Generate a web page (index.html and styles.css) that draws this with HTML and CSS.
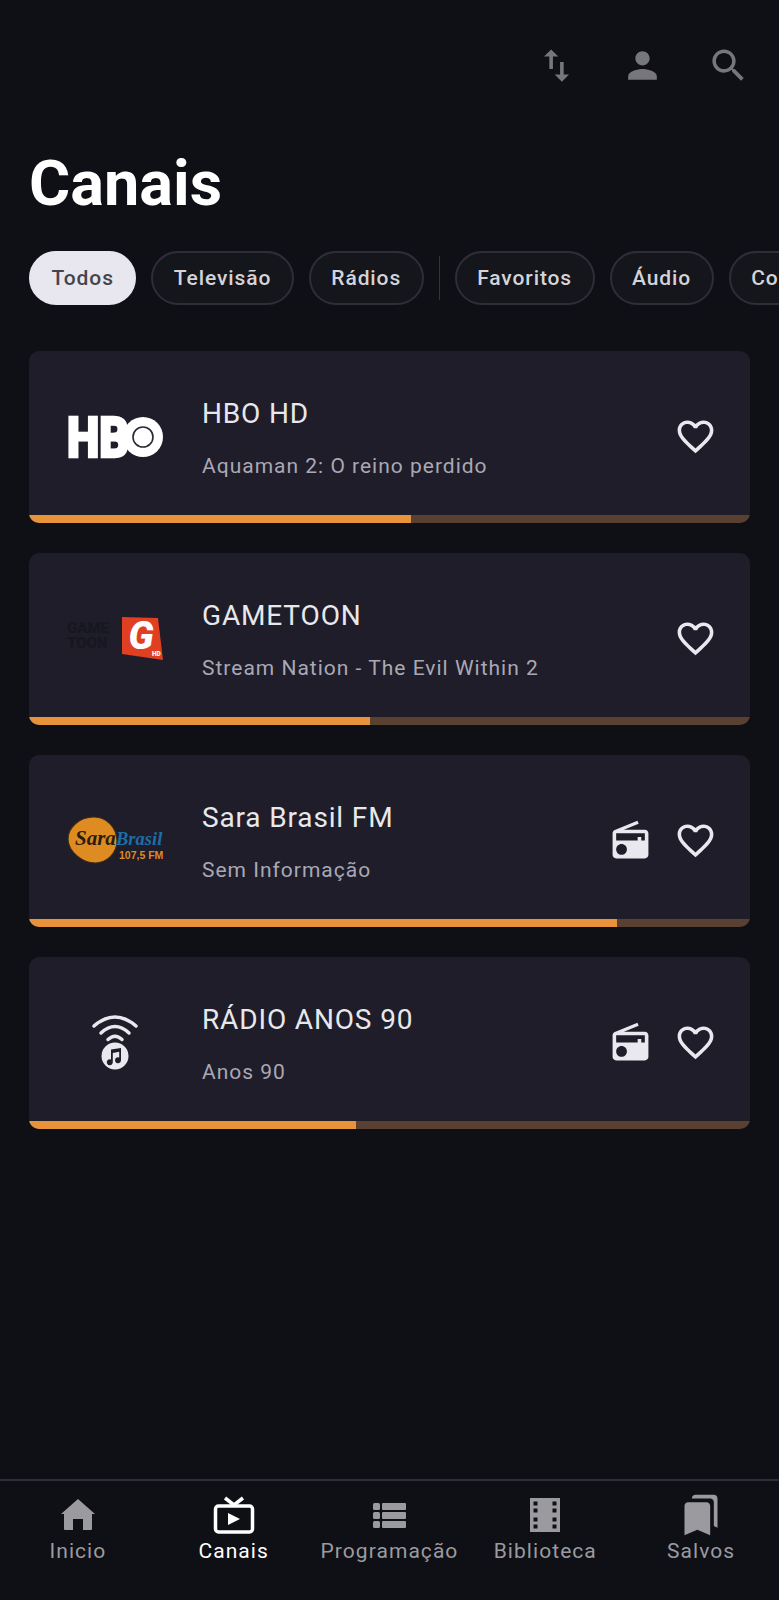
FILE: index.html
```html
<!DOCTYPE html>
<html lang="en">
<head>
  <meta charset="UTF-8" />
  <meta name="viewport" content="width=device-width, initial-scale=1.0"/>
  <title>Canais</title>
  <link rel="stylesheet" href="styles.css">
</head>
<body>
  <div class="app">
    <div class="top-bar">
      <svg class="top-icon" viewBox="0 0 24 24"><path d="M16 17.01V10h-2v7.01h-3L15 21l4-3.99h-3zM9 3L5 6.99h3V14h2V6.99h3L9 3z"/></svg>
      <svg class="top-icon" viewBox="0 0 24 24"><path d="M12 12c2.21 0 4-1.79 4-4s-1.79-4-4-4-4 1.79-4 4 1.79 4 4 4zm0 2c-2.67 0-8 1.34-8 4v2h16v-2c0-2.66-5.33-4-8-4z"/></svg>
      <svg class="top-icon" viewBox="0 0 24 24"><path d="M15.5 14h-.79l-.28-.27C15.41 12.59 16 11.11 16 9.5 16 5.91 13.09 3 9.5 3S3 5.91 3 9.5 5.91 16 9.5 16c1.61 0 3.09-.59 4.23-1.57l.27.28v.79l5 4.99L20.49 19l-4.99-5zm-6 0C7.01 14 5 11.99 5 9.5S7.01 5 9.5 5 14 7.01 14 9.5 11.99 14 9.5 14z"/></svg>
    </div>

    <h1 class="page-title">Canais</h1>

    <div class="chips">
      <span class="chip chip-active">Todos</span>
      <span class="chip">Televisão</span>
      <span class="chip">Rádios</span>
      <span class="chip-divider"></span>
      <span class="chip">Favoritos</span>
      <span class="chip">Áudio</span>
      <span class="chip chip-cut">Co</span>
    </div>

    <div class="channel-list">
      <div class="channel-card">
        <div class="channel-row">
          <svg class="channel-logo" viewBox="0 0 98 98">
            <text class="logo-hbo" x="1" y="69" textLength="62" lengthAdjust="spacingAndGlyphs">HB</text>
            <circle cx="77" cy="49" r="20" fill="#fff"/>
            <circle cx="77" cy="49" r="10" fill="#fff" stroke="#2a2933" stroke-width="1.6"/>
          </svg>
          <div class="channel-info">
            <div class="channel-name">HBO HD</div>
            <div class="channel-show">Aquaman 2: O reino perdido</div>
          </div>
          <svg class="action-icon" viewBox="0 0 24 24"><path d="M16.5 3c-1.74 0-3.41.81-4.5 2.09C10.91 3.81 9.24 3 7.5 3 4.42 3 2 5.42 2 8.5c0 3.78 3.4 6.86 8.55 11.54L12 21.35l1.45-1.32C18.6 15.36 22 12.28 22 8.5 22 5.42 19.58 3 16.5 3zm-4.4 15.55l-.1.1-.1-.1C7.14 14.24 4 11.39 4 8.5 4 6.5 5.5 5 7.5 5c1.54 0 3.04.99 3.57 2.36h1.87C13.46 5.99 14.96 5 16.5 5c2 0 3.5 1.5 3.5 3.5 0 2.89-3.14 5.74-7.9 10.05z"/></svg>
        </div>
        <div class="progress"><div class="progress-fill" style="width: 53%"></div></div>
      </div>

      <div class="channel-card">
        <div class="channel-row">
          <svg class="channel-logo" viewBox="0 0 98 98">
            <text class="logo-game" x="1" y="43">GAME</text>
            <text class="logo-game" x="1" y="58">TOON</text>
            <path d="M56 27 92 28 97 70 56 64z" fill="#e03f22"/>
            <text class="logo-g" x="75" y="59" text-anchor="middle">G</text>
            <text class="logo-hd" x="86" y="66">HD</text>
          </svg>
          <div class="channel-info">
            <div class="channel-name">GAMETOON</div>
            <div class="channel-show">Stream Nation - The Evil Within 2</div>
          </div>
          <svg class="action-icon" viewBox="0 0 24 24"><path d="M16.5 3c-1.74 0-3.41.81-4.5 2.09C10.91 3.81 9.24 3 7.5 3 4.42 3 2 5.42 2 8.5c0 3.78 3.4 6.86 8.55 11.54L12 21.35l1.45-1.32C18.6 15.36 22 12.28 22 8.5 22 5.42 19.58 3 16.5 3zm-4.4 15.55l-.1.1-.1-.1C7.14 14.24 4 11.39 4 8.5 4 6.5 5.5 5 7.5 5c1.54 0 3.04.99 3.57 2.36h1.87C13.46 5.99 14.96 5 16.5 5c2 0 3.5 1.5 3.5 3.5 0 2.89-3.14 5.74-7.9 10.05z"/></svg>
        </div>
        <div class="progress"><div class="progress-fill" style="width: 47.3%"></div></div>
      </div>

      <div class="channel-card">
        <div class="channel-row">
          <svg class="channel-logo" viewBox="0 0 98 98">
            <path d="M2 47C2 35 14 25 28 25 41 25 51 36 51 49 51 62 40 71 29 71 17 71 2 60 2 47z" fill="#de8b22" stroke="#3a2a18" stroke-width="1.2"/>
            <text class="logo-sara" x="9" y="53">Sara</text>
            <text class="logo-brasil" x="50" y="53">Brasil</text>
            <text class="logo-fm" x="53" y="67">107,5 FM</text>
          </svg>
          <div class="channel-info">
            <div class="channel-name">Sara Brasil FM</div>
            <div class="channel-show">Sem Informação</div>
          </div>
          <svg class="action-icon radio-icon" viewBox="0 0 24 24"><path d="M3.24 6.15C2.51 6.43 2 7.17 2 8v12c0 1.1.89 2 2 2h16c1.11 0 2-.9 2-2V8c0-1.11-.89-2-2-2H8.3l8.26-3.34L15.88 1 3.24 6.15zM7 20c-1.66 0-3-1.34-3-3s1.34-3 3-3 3 1.34 3 3-1.34 3-3 3zm13-8h-2v-2h-2v2H4V8h16v4z"/></svg>
          <svg class="action-icon" viewBox="0 0 24 24"><path d="M16.5 3c-1.74 0-3.41.81-4.5 2.09C10.91 3.81 9.24 3 7.5 3 4.42 3 2 5.42 2 8.5c0 3.78 3.4 6.86 8.55 11.54L12 21.35l1.45-1.32C18.6 15.36 22 12.28 22 8.5 22 5.42 19.58 3 16.5 3zm-4.4 15.55l-.1.1-.1-.1C7.14 14.24 4 11.39 4 8.5 4 6.5 5.5 5 7.5 5c1.54 0 3.04.99 3.57 2.36h1.87C13.46 5.99 14.96 5 16.5 5c2 0 3.5 1.5 3.5 3.5 0 2.89-3.14 5.74-7.9 10.05z"/></svg>
        </div>
        <div class="progress"><div class="progress-fill" style="width: 81.5%"></div></div>
      </div>

      <div class="channel-card">
        <div class="channel-row">
          <svg class="channel-logo" viewBox="0 0 98 98">
            <path class="logo-wave" d="M28 32Q49 14 70 32"/>
            <path class="logo-wave" d="M35 39Q49 26 63 39"/>
            <path class="logo-wave" d="M42 45.5Q49 39 56 45.5"/>
            <circle cx="49" cy="62" r="13.5" fill="#e9e8ee"/>
            <path d="M45 55.5v10a3 3 0 1 0 1.8 2.6v-9l6.4-1.3v5.7a3 3 0 1 0 1.8 2.6V54z" fill="#1e1d29"/>
          </svg>
          <div class="channel-info">
            <div class="channel-name">RÁDIO ANOS 90</div>
            <div class="channel-show">Anos 90</div>
          </div>
          <svg class="action-icon radio-icon" viewBox="0 0 24 24"><path d="M3.24 6.15C2.51 6.43 2 7.17 2 8v12c0 1.1.89 2 2 2h16c1.11 0 2-.9 2-2V8c0-1.11-.89-2-2-2H8.3l8.26-3.34L15.88 1 3.24 6.15zM7 20c-1.66 0-3-1.34-3-3s1.34-3 3-3 3 1.34 3 3-1.34 3-3 3zm13-8h-2v-2h-2v2H4V8h16v4z"/></svg>
          <svg class="action-icon" viewBox="0 0 24 24"><path d="M16.5 3c-1.74 0-3.41.81-4.5 2.09C10.91 3.81 9.24 3 7.5 3 4.42 3 2 5.42 2 8.5c0 3.78 3.4 6.86 8.55 11.54L12 21.35l1.45-1.32C18.6 15.36 22 12.28 22 8.5 22 5.42 19.58 3 16.5 3zm-4.4 15.55l-.1.1-.1-.1C7.14 14.24 4 11.39 4 8.5 4 6.5 5.5 5 7.5 5c1.54 0 3.04.99 3.57 2.36h1.87C13.46 5.99 14.96 5 16.5 5c2 0 3.5 1.5 3.5 3.5 0 2.89-3.14 5.74-7.9 10.05z"/></svg>
        </div>
        <div class="progress"><div class="progress-fill" style="width: 45.4%"></div></div>
      </div>
    </div>

    <nav class="bottom-nav">
      <div class="nav-item">
        <svg class="nav-icon" viewBox="0 0 44 44"><path d="M17 37V26h10v11h8a1 1 0 0 0 1-1V21h3L22 6 5 21h3v15a1 1 0 0 0 1 1z"/></svg>
        <span>Inicio</span>
      </div>
      <div class="nav-item nav-item-active">
        <svg class="nav-icon" viewBox="0 0 44 44">
          <path class="tv-stroke" d="M13 5l9 7 9-7"/>
          <rect class="tv-stroke" x="3.5" y="13" width="37" height="26" rx="3"/>
          <path d="M16 20l12 6-12 6z"/>
        </svg>
        <span>Canais</span>
      </div>
      <div class="nav-item">
        <svg class="nav-icon" viewBox="0 0 44 44">
          <rect x="6" y="10" width="7" height="7" rx="1.5"/><rect x="15" y="10" width="24" height="7" rx="1"/>
          <rect x="6" y="19" width="7" height="7" rx="1.5"/><rect x="15" y="19" width="24" height="7" rx="1"/>
          <rect x="6" y="28" width="7" height="7" rx="1.5"/><rect x="15" y="28" width="24" height="7" rx="1"/>
        </svg>
        <span>Programação</span>
      </div>
      <div class="nav-item">
        <svg class="nav-icon" viewBox="0 0 44 44">
          <path fill-rule="evenodd" d="M7 5h30v34H7zM10.5 8.5v4h4v-4zM29.5 8.5v4h4v-4zM10.5 15.500v4h4v-4zM29.5 15.500v4h4v-4zM10.5 24.500v4h4v-4zM29.5 24.500v4h4v-4zM10.5 31.500v4h4v-4zM29.5 31.500v4h4v-4z"/>
        </svg>
        <span>Biblioteca</span>
      </div>
      <div class="nav-item">
        <svg class="nav-icon" viewBox="0 0 24 24"><path d="M19 18l2 1V3c0-1.1-.9-2-2-2H8.99C7.89 1 7 1.9 7 3h10c1.1 0 2 .9 2 2v13zM15 5H5c-1.1 0-2 .9-2 2v16l7-3 7 3V7c0-1.1-.9-2-2-2z"/></svg>
        <span>Salvos</span>
      </div>
    </nav>
  </div>
</body>
</html>
```

FILE: styles.css
```css
body {
  font-family: 'Roboto', sans-serif;
  background-color: #0f0f16;
  color: #e8e8ec;
  margin: 0;
}

.app {
  display: flex;
  flex-direction: column;
  height: 1600px;
  overflow: hidden;
}

.top-bar {
  display: flex;
  justify-content: flex-end;
  gap: 43px;
  padding: 44px 29px 0 0;
}

.top-icon {
  width: 43px;
  height: 43px;
  fill: #77767c;
}

.page-title {
  margin: 60px 0 0 29px;
  font-size: 63px;
  line-height: 73px;
  font-weight: 700;
  color: #ffffff;
}

.chips {
  display: flex;
  align-items: center;
  gap: 15px;
  margin-top: 31px;
  padding-left: 29px;
}

.chip {
  flex-shrink: 0;
  box-sizing: border-box;
  height: 54px;
  line-height: 50px;
  padding: 0 20.5px;
  border: 2px solid #2e2e38;
  border-radius: 27px;
  font-size: 21px;
  font-weight: 500;
  letter-spacing: 0.9px;
  color: #d4d3d8;
  background-color: #15151c;
}

.chip-active {
  background-color: #e8e7ef;
  border-color: #e8e7ef;
  color: #45444c;
}

/* the last chip runs off the right edge of the screen */
.chip-cut {
  padding-right: 60px;
}

.chip-divider {
  flex-shrink: 0;
  width: 1px;
  height: 44px;
  background-color: #33333c;
}

.channel-list {
  display: flex;
  flex-direction: column;
  gap: 30px;
  margin: 46px 29px 0;
}

.channel-card {
  display: flex;
  flex-direction: column;
  height: 172px;
  background-color: #1e1d29;
  border-radius: 10px;
  overflow: hidden;
}

.channel-row {
  flex: 1;
  display: flex;
  align-items: center;
  padding: 7px 33px 0 37px;
}

.channel-logo {
  flex-shrink: 0;
  width: 98px;
  height: 98px;
  margin-right: 38px;
}

.channel-info {
  flex: 1;
  display: flex;
  flex-direction: column;
  gap: 21px;
  margin-top: 3px;
}

.channel-name {
  font-size: 28px;
  line-height: 35px;
  letter-spacing: 0.85px;
  color: #e8e8ec;
}

.channel-show {
  font-size: 21px;
  line-height: 28px;
  letter-spacing: 1px;
  color: #aaa8b4;
}

.action-icon {
  width: 43px;
  height: 43px;
  fill: #e9e8ee;
}

.radio-icon {
  margin-right: 22px;
}

.progress {
  height: 8px;
  background-color: #5a4030;
}

.progress-fill {
  height: 100%;
  background-color: #e8923a;
}

.logo-hbo {
  font-family: 'Roboto', sans-serif;
  font-size: 56px;
  font-weight: 900;
  fill: #ffffff;
  stroke: #ffffff;
  stroke-width: 2.5px;
}

.logo-game {
  font-family: 'Roboto', sans-serif;
  font-size: 15px;
  font-weight: 900;
  fill: #17171f;
}

.logo-g {
  font-family: 'Roboto', sans-serif;
  font-size: 38px;
  font-weight: 900;
  font-style: italic;
  fill: #ffffff;
}

.logo-hd {
  font-family: 'Roboto', sans-serif;
  font-size: 6.5px;
  font-weight: 900;
  fill: #ffffff;
}

.logo-sara {
  font-family: 'Liberation Serif', serif;
  font-size: 21px;
  font-style: italic;
  font-weight: 700;
  fill: #2a1d10;
}

.logo-brasil {
  font-family: 'Liberation Serif', serif;
  font-size: 18.5px;
  font-style: italic;
  font-weight: 700;
  fill: #1b6ea6;
}

.logo-fm {
  font-family: 'Liberation Sans', sans-serif;
  font-size: 10.5px;
  font-weight: 700;
  fill: #de8b22;
}

.logo-wave {
  fill: none;
  stroke: #e9e8ee;
  stroke-width: 3.5px;
  stroke-linecap: round;
}

.bottom-nav {
  display: grid;
  grid-template-columns: repeat(5, 1fr);
  margin-top: auto;
  height: 121px;
  box-sizing: border-box;
  border-top: 2px solid #2f2e38;
  padding-top: 12px;
}

.nav-item {
  display: flex;
  flex-direction: column;
  align-items: center;
  gap: 1px;
  font-size: 21px;
  line-height: 26px;
  letter-spacing: 1.05px;
  color: #9b9b9f;
}

.nav-item-active {
  color: #ffffff;
}

.nav-icon {
  width: 44px;
  height: 44px;
  fill: #9b9b9f;
}

.nav-item-active .nav-icon {
  fill: #ffffff;
}

.tv-stroke {
  fill: none;
  stroke: #ffffff;
  stroke-width: 3.5px;
}
```
